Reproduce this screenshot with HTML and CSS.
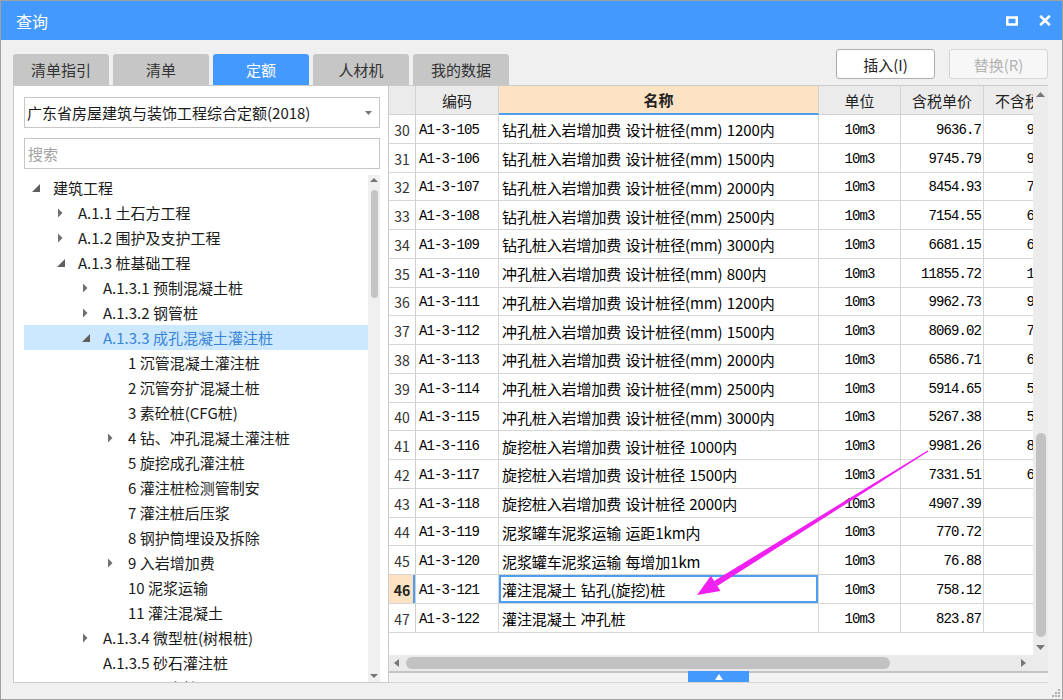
FILE: index.html
```html
<!DOCTYPE html>
<html lang="zh-CN">
<head>
<meta charset="utf-8">
<title>查询</title>
<link rel="stylesheet" href="styles.css">
</head>
<body>
<div class="window">
  <div class="titlebar">
    <span class="title">查询</span>
    <div class="winbtns">
      <svg class="ic" width="12" height="10" viewBox="0 0 12 10"><rect x="1.25" y="1.5" width="9.5" height="7" fill="none" stroke="#fff" stroke-width="2.5"/></svg>
      <svg class="ic" width="12" height="11" viewBox="0 0 12 11"><path d="M1.2 0.8 L10.8 10.2 M10.8 0.8 L1.2 10.2" stroke="#fff" stroke-width="2.6" fill="none"/></svg>
    </div>
  </div>

  <div class="content">
    <div class="toprow">
      <div class="tabs">
        <div class="tab">清单指引</div>
        <div class="tab">清单</div>
        <div class="tab active">定额</div>
        <div class="tab">人材机</div>
        <div class="tab">我的数据</div>
      </div>
      <div class="actions">
        <div class="btn">插入(I)</div>
        <div class="btn disabled">替换(R)</div>
      </div>
    </div>

    <div class="main">
      <div class="left">
        <div class="combo">
          <span>广东省房屋建筑与装饰工程综合定额(2018)</span>
          <svg width="7" height="4" viewBox="0 0 7 4"><polygon points="0,0 7,0 3.5,4" fill="#777"/></svg>
        </div>
        <div class="search">搜索</div>
        <div class="treewrap">
          <div class="tree">
            <div class="node l0"><svg class="exp" viewBox="0 0 16 16"><polygon class="open" points="12,4 12,12 4,12"/></svg><span>建筑工程</span></div>
            <div class="node l1"><svg class="exp" viewBox="0 0 16 16"><polygon class="shut" points="5,3.5 9.5,8 5,12.5"/></svg><span>A.1.1 土石方工程</span></div>
            <div class="node l1"><svg class="exp" viewBox="0 0 16 16"><polygon class="shut" points="5,3.5 9.5,8 5,12.5"/></svg><span>A.1.2 围护及支护工程</span></div>
            <div class="node l1"><svg class="exp" viewBox="0 0 16 16"><polygon class="open" points="12,4 12,12 4,12"/></svg><span>A.1.3 桩基础工程</span></div>
            <div class="node l2"><svg class="exp" viewBox="0 0 16 16"><polygon class="shut" points="5,3.5 9.5,8 5,12.5"/></svg><span>A.1.3.1 预制混凝土桩</span></div>
            <div class="node l2"><svg class="exp" viewBox="0 0 16 16"><polygon class="shut" points="5,3.5 9.5,8 5,12.5"/></svg><span>A.1.3.2 钢管桩</span></div>
            <div class="node l2 selected"><svg class="exp" viewBox="0 0 16 16"><polygon class="open" points="12,4 12,12 4,12"/></svg><span>A.1.3.3 成孔混凝土灌注桩</span></div>
            <div class="node l3"><span class="exp"></span><span>1 沉管混凝土灌注桩</span></div>
            <div class="node l3"><span class="exp"></span><span>2 沉管夯扩混凝土桩</span></div>
            <div class="node l3"><span class="exp"></span><span>3 素砼桩(CFG桩)</span></div>
            <div class="node l3"><svg class="exp" viewBox="0 0 16 16"><polygon class="shut" points="5,3.5 9.5,8 5,12.5"/></svg><span>4 钻、冲孔混凝土灌注桩</span></div>
            <div class="node l3"><span class="exp"></span><span>5 旋挖成孔灌注桩</span></div>
            <div class="node l3"><span class="exp"></span><span>6 灌注桩检测管制安</span></div>
            <div class="node l3"><span class="exp"></span><span>7 灌注桩后压浆</span></div>
            <div class="node l3"><span class="exp"></span><span>8 钢护筒埋设及拆除</span></div>
            <div class="node l3"><svg class="exp" viewBox="0 0 16 16"><polygon class="shut" points="5,3.5 9.5,8 5,12.5"/></svg><span>9 入岩增加费</span></div>
            <div class="node l3"><span class="exp"></span><span>10 泥浆运输</span></div>
            <div class="node l3"><span class="exp"></span><span>11 灌注混凝土</span></div>
            <div class="node l2"><svg class="exp" viewBox="0 0 16 16"><polygon class="shut" points="5,3.5 9.5,8 5,12.5"/></svg><span>A.1.3.4 微型桩(树根桩)</span></div>
            <div class="node l2"><span class="exp"></span><span>A.1.3.5 砂石灌注桩</span></div>
            <div class="node l2"><span class="exp"></span><span>A.1.3.6 圆木桩</span></div>
          </div>
          <div class="tscroll">
            <svg class="sarrow" width="12" height="12" viewBox="0 0 12 12"><polygon points="2,7 10,7 6,3" fill="#777"/></svg>
            <div class="ttrack"><div class="tthumb"></div></div>
            <svg class="sarrow" width="12" height="12" viewBox="0 0 12 12"><polygon points="2,4 10,4 6,8" fill="#777"/></svg>
          </div>
        </div>
      </div>

      <div class="right">
        <div class="gridrow">
          <div class="viewport">
            <div class="grid">
              <div class="h rn"></div><div class="h">编码</div><div class="h hname">名称</div><div class="h">单位</div><div class="h">含税单价</div><div class="h">不含税单价</div>

              <div class="c rn">30</div><div class="c code">A1-3-105</div><div class="c name">钻孔桩入岩增加费 设计桩径(mm) 1200内</div><div class="c unit">10m3</div><div class="c num">9636.7</div><div class="c num">9224.35</div>
              <div class="c rn">31</div><div class="c code">A1-3-106</div><div class="c name">钻孔桩入岩增加费 设计桩径(mm) 1500内</div><div class="c unit">10m3</div><div class="c num">9745.79</div><div class="c num">9328.62</div>
              <div class="c rn">32</div><div class="c code">A1-3-107</div><div class="c name">钻孔桩入岩增加费 设计桩径(mm) 2000内</div><div class="c unit">10m3</div><div class="c num">8454.93</div><div class="c num">7992.37</div>
              <div class="c rn">33</div><div class="c code">A1-3-108</div><div class="c name">钻孔桩入岩增加费 设计桩径(mm) 2500内</div><div class="c unit">10m3</div><div class="c num">7154.55</div><div class="c num">6762.26</div>
              <div class="c rn">34</div><div class="c code">A1-3-109</div><div class="c name">钻孔桩入岩增加费 设计桩径(mm) 3000内</div><div class="c unit">10m3</div><div class="c num">6681.15</div><div class="c num">6315.13</div>
              <div class="c rn">35</div><div class="c code">A1-3-110</div><div class="c name">冲孔桩入岩增加费 设计桩径(mm) 800内</div><div class="c unit">10m3</div><div class="c num">11855.72</div><div class="c num">1120.57</div>
              <div class="c rn">36</div><div class="c code">A1-3-111</div><div class="c name">冲孔桩入岩增加费 设计桩径(mm) 1200内</div><div class="c unit">10m3</div><div class="c num">9962.73</div><div class="c num">9416.86</div>
              <div class="c rn">37</div><div class="c code">A1-3-112</div><div class="c name">冲孔桩入岩增加费 设计桩径(mm) 1500内</div><div class="c unit">10m3</div><div class="c num">8069.02</div><div class="c num">7627.24</div>
              <div class="c rn">38</div><div class="c code">A1-3-113</div><div class="c name">冲孔桩入岩增加费 设计桩径(mm) 2000内</div><div class="c unit">10m3</div><div class="c num">6586.71</div><div class="c num">6225.89</div>
              <div class="c rn">39</div><div class="c code">A1-3-114</div><div class="c name">冲孔桩入岩增加费 设计桩径(mm) 2500内</div><div class="c unit">10m3</div><div class="c num">5914.65</div><div class="c num">5590.79</div>
              <div class="c rn">40</div><div class="c code">A1-3-115</div><div class="c name">冲孔桩入岩增加费 设计桩径(mm) 3000内</div><div class="c unit">10m3</div><div class="c num">5267.38</div><div class="c num">5178.62</div>
              <div class="c rn">41</div><div class="c code">A1-3-116</div><div class="c name">旋挖桩入岩增加费 设计桩径 1000内</div><div class="c unit">10m3</div><div class="c num">9981.26</div><div class="c num">8934.57</div>
              <div class="c rn">42</div><div class="c code">A1-3-117</div><div class="c name">旋挖桩入岩增加费 设计桩径 1500内</div><div class="c unit">10m3</div><div class="c num">7331.51</div><div class="c num">6562.36</div>
              <div class="c rn">43</div><div class="c code">A1-3-118</div><div class="c name">旋挖桩入岩增加费 设计桩径 2000内</div><div class="c unit">10m3</div><div class="c num">4907.39</div><div class="c num">4392.7</div>
              <div class="c rn">44</div><div class="c code">A1-3-119</div><div class="c name">泥浆罐车泥浆运输 运距1km内</div><div class="c unit">10m3</div><div class="c num">770.72</div><div class="c num">706.1</div>
              <div class="c rn">45</div><div class="c code">A1-3-120</div><div class="c name">泥浆罐车泥浆运输 每增加1km</div><div class="c unit">10m3</div><div class="c num">76.88</div><div class="c num">70.37</div>
              <div class="c rn cur-rn">46</div><div class="c code">A1-3-121</div><div class="c name cur">灌注混凝土 钻孔(旋挖)桩</div><div class="c unit">10m3</div><div class="c num">758.12</div><div class="c num">693.5</div>
              <div class="c rn">47</div><div class="c code">A1-3-122</div><div class="c name">灌注混凝土 冲孔桩</div><div class="c unit">10m3</div><div class="c num">823.87</div><div class="c num">804.13</div>
            </div>
          </div>
          <div class="vscroll">
            <svg class="varrow" width="15" height="18" viewBox="0 0 15 18"><polygon points="3,11 12,11 7.5,6" fill="#777"/></svg>
            <div class="vtrack"><div class="vthumb"></div></div>
            <svg class="varrow" width="15" height="16" viewBox="0 0 15 16"><polygon points="3,6 12,6 7.5,11" fill="#777"/></svg>
          </div>
        </div>
        <div class="hscroll">
          <svg class="harrow" width="16" height="16" viewBox="0 0 16 16"><polygon points="10,4 10,12 5,8" fill="#777"/></svg>
          <div class="htrack"><div class="hthumb"></div></div>
          <svg class="harrow" width="18" height="16" viewBox="0 0 18 16"><polygon points="6,4 6,12 11,8" fill="#777"/></svg>
          <div class="corner"></div>
        </div>
        <div class="splitter">
          <div class="split-tab"><svg width="8" height="6" viewBox="0 0 8 6"><polygon points="0,6 8,6 4,0" fill="#fff"/></svg></div>
        </div>
      </div>
    </div>
  </div>

  <svg class="overlay" width="1063" height="700" viewBox="0 0 1063 700">
    <polygon points="928.4,451.5 927.6,450.5 714.1,580.9 717.3,585.9" fill="#f020f0"/>
    <polygon points="697,595 710.9,575.8 720.5,591.0" fill="#f020f0"/>
  </svg>
  <svg class="grip" width="10" height="10" viewBox="0 0 10 10">
    <rect x="7" y="1" width="2" height="2" fill="#b0b0b0"/>
    <rect x="4" y="4" width="2" height="2" fill="#b0b0b0"/>
    <rect x="7" y="4" width="2" height="2" fill="#b0b0b0"/>
    <rect x="1" y="7" width="2" height="2" fill="#b0b0b0"/>
    <rect x="4" y="7" width="2" height="2" fill="#b0b0b0"/>
    <rect x="7" y="7" width="2" height="2" fill="#b0b0b0"/>
  </svg>
</div>
</body>
</html>
```

FILE: styles.css
```css
* { box-sizing: border-box; }
html, body { margin: 0; padding: 0; }
body {
  width: 1063px;
  height: 700px;
  overflow: hidden;
  background: #f0f0f0;
  font-family: "Noto Sans CJK SC", "Noto Sans", sans-serif;
  color: #222;
}

.window {
  position: relative;
  width: 1063px;
  height: 700px;
  border: 1px solid #a0a0a0;
  background: #f0f0f0;
  display: flex;
  flex-direction: column;
}

/* title bar */
.titlebar {
  flex: none;
  height: 39px;
  background: #4499ff;
  color: #fff;
  display: flex;
  align-items: center;
  justify-content: space-between;
  padding: 0 11px 0 15px;
}
.title { font-size: 16px; line-height: 1; }
.winbtns { display: flex; align-items: center; gap: 21px; }
.ic { display: block; }

/* content */
.content {
  flex: 1;
  display: flex;
  flex-direction: column;
  padding: 0 14px 0 12px;
}
.toprow {
  flex: none;
  height: 45px;
  display: flex;
  justify-content: space-between;
}
.tabs {
  align-self: flex-end;
  display: flex;
  gap: 4px;
}
.tab {
  width: 96px;
  height: 31px;
  background: #c6c6c6;
  border-radius: 3px 3px 0 0;
  font-size: 15px;
  color: #333;
  display: flex;
  align-items: center;
  justify-content: center;
}
.tab.active { background: #4499ff; color: #fff; }

.actions {
  display: flex;
  gap: 14px;
  padding-top: 9px;
  padding-right: 0;
}
.btn {
  width: 99px;
  height: 30px;
  background: #fff;
  border: 1px solid #adadad;
  border-radius: 3px;
  font-size: 15px;
  color: #222;
  display: flex;
  align-items: center;
  justify-content: center;
}
.btn.disabled {
  background: #f7f7f7;
  border-color: #d6d6d6;
  color: #b3b3b3;
}

/* main area */
.main {
  flex: none;
  height: 598px;
  display: flex;
}

.left {
  width: 376px;
  flex: none;
  background: #fff;
  border: 1px solid #cacaca;
  padding: 11px 8px 0 10px;
  display: flex;
  flex-direction: column;
}
.combo {
  flex: none;
  height: 31px;
  border: 1px solid #c6c6c6;
  display: flex;
  align-items: center;
  justify-content: space-between;
  padding: 0 7px 0 2px;
  font-size: 15px;
  color: #1a1a1a;
  white-space: nowrap;
}
.search {
  flex: none;
  margin-top: 10px;
  height: 31px;
  border: 1px solid #c6c6c6;
  padding-left: 3px;
  font-size: 15px;
  color: #a3a3a3;
  display: flex;
  align-items: center;
}
.treewrap {
  flex: 1;
  min-height: 0;
  margin-top: 6px;
  display: flex;
  overflow: hidden;
}
.tree {
  flex: 1;
  overflow: hidden;
}
.node {
  height: 25px;
  display: flex;
  align-items: center;
  font-size: 15px;
  color: #1a1a1a;
  white-space: nowrap;
}
.node.l0 { padding-left: 4px; }
.node.l1 { padding-left: 29px; }
.node.l2 { padding-left: 54px; }
.node.l3 { padding-left: 79px; }
.node.selected { background: #cce8ff; color: #3a84d8; }
.exp {
  flex: none;
  display: block;
  width: 16px;
  height: 16px;
  margin-right: 9px;
}
.exp .open { fill: #5f5f5f; }
.exp .shut { fill: #707070; }

.tscroll {
  flex: none;
  width: 12px;
  background: #f0f0f0;
  display: flex;
  flex-direction: column;
}
.sarrow { display: block; flex: none; }
.ttrack {
  flex: 1;
  padding-top: 3px;
  display: flex;
  justify-content: center;
}
.tthumb {
  width: 7px;
  height: 108px;
  border-radius: 4px;
  background: #c4c4c4;
}

/* right grid */
.right {
  flex: 1;
  min-width: 0;
  background: #fff;
  border-top: 1px solid #cacaca;
  display: flex;
  flex-direction: column;
}
.gridrow {
  flex: 1;
  min-height: 0;
  display: flex;
}
.viewport {
  flex: 1;
  min-width: 0;
  overflow: hidden;
  background: #fff;
}
.grid {
  display: grid;
  grid-template-columns: 27px 83px 320px 82px 83px 98px;
  grid-template-rows: 29px repeat(18, 28.75px);
  width: 693px;
}
.h {
  background: #ebebeb;
  border-right: 1px solid #d2d2d2;
  border-bottom: 1px solid #d2d2d2;
  font-size: 15px;
  color: #222;
  display: flex;
  align-items: center;
  justify-content: center;
  white-space: nowrap;
  overflow: hidden;
}
.h.hname {
  background: #fde3c3;
  font-weight: bold;
  border-bottom: 2px solid #4d9df0;
}
.c {
  border-right: 1px solid #d6d6d6;
  border-bottom: 1px solid #d6d6d6;
  padding-top: 2px;
  display: flex;
  align-items: center;
  white-space: nowrap;
  overflow: hidden;
  color: #000;
}
.c.rn {
  justify-content: center;
  font-size: 14px;
  color: #333;
  border-right-color: #cfcfcf;
}
.c.cur-rn {
  background: #fde3c3;
  font-weight: bold;
  color: #222;
  box-shadow: inset -2px 0 0 #4d9df0;
}
.c.code {
  padding-left: 3px;
  font-family: "Liberation Mono", monospace;
  font-size: 14px;
  letter-spacing: -0.9px;
}
.c.name {
  padding-left: 3px;
  font-size: 15px;
  word-spacing: 1px;
  letter-spacing: -0.1px;
}
.c.name.cur { box-shadow: inset 0 0 0 2px #4d9df0; }
.c.unit {
  justify-content: center;
  font-family: "Liberation Mono", monospace;
  font-size: 14px;
  letter-spacing: -0.9px;
}
.c.num {
  justify-content: flex-end;
  padding-right: 2px;
  font-family: "Liberation Mono", monospace;
  font-size: 14px;
  letter-spacing: -0.9px;
}

.vscroll {
  flex: none;
  width: 15px;
  background: #ececec;
  display: flex;
  flex-direction: column;
}
.varrow { display: block; flex: none; }
.vtrack {
  flex: 1;
  display: flex;
  flex-direction: column;
  justify-content: flex-end;
  align-items: center;
  padding-bottom: 2px;
}
.vthumb {
  width: 10px;
  height: 204px;
  border-radius: 5px;
  background: #c2c2c2;
}

.hscroll {
  flex: none;
  height: 16px;
  background: #eaeaea;
  display: flex;
  align-items: center;
}
.harrow { display: block; flex: none; }
.htrack {
  flex: 1;
  height: 16px;
  display: flex;
  align-items: center;
  padding-left: 1px;
}
.hthumb {
  width: 484px;
  height: 12px;
  border-radius: 6px;
  background: #c2c2c2;
}
.corner {
  flex: none;
  width: 15px;
  height: 16px;
  background: #ececec;
}

.splitter {
  flex: none;
  height: 12px;
  background: #f3f3f3;
  border-top: 2px solid #c4c4c4;
  border-bottom: 1px solid #d6d6d6;
  display: flex;
  justify-content: center;
}
.split-tab {
  width: 61px;
  height: 11px;
  margin-top: -2px;
  background: #4499ff;
  display: flex;
  align-items: center;
  justify-content: center;
}
.split-tab svg { display: block; }

/* overlays */
.overlay {
  position: absolute;
  left: -1px;
  top: -1px;
  pointer-events: none;
}
.grip {
  position: absolute;
  right: 1px;
  bottom: 1px;
}
```
